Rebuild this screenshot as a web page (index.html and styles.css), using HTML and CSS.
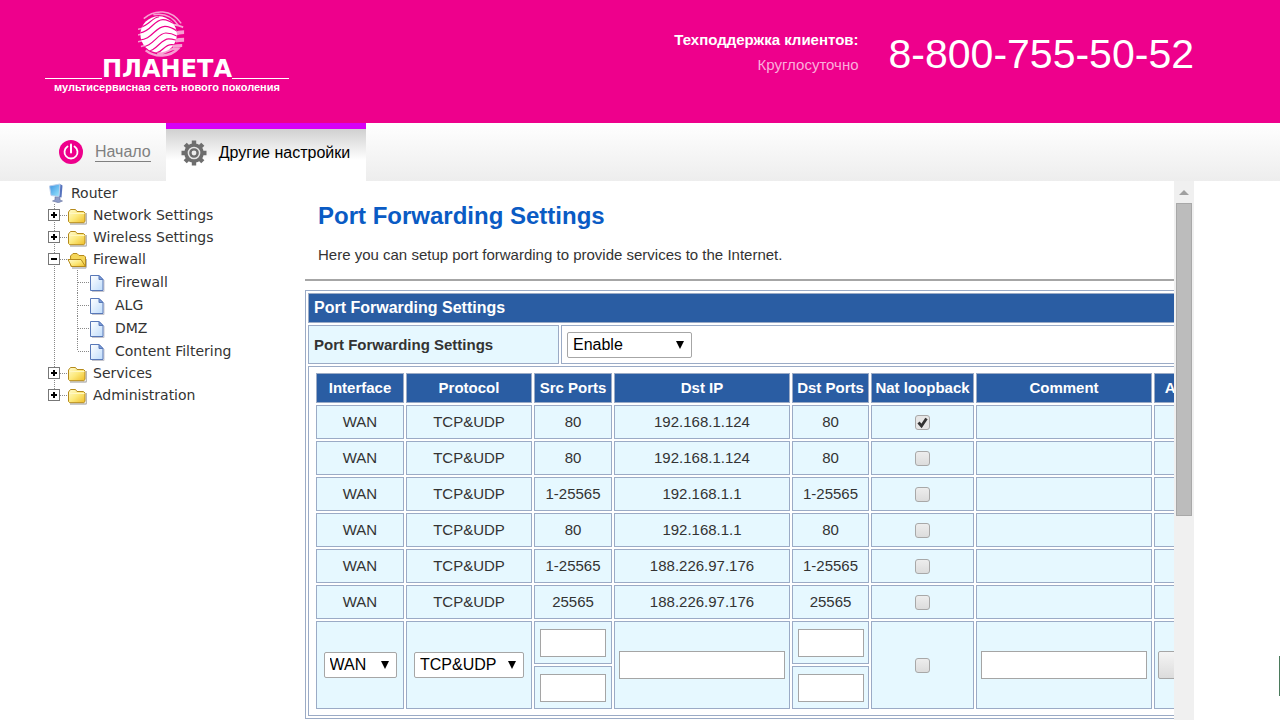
FILE: index.html
```html
<!DOCTYPE html>
<html lang="ru">
<head>
<meta charset="utf-8">
<title>Port Forwarding Settings</title>
<link rel="stylesheet" href="styles.css">
</head>
<body>
<svg class="defs" aria-hidden="true">
  <defs>
    <linearGradient id="gold" x1="0" y1="0" x2="1" y2="1"><stop offset="0" stop-color="#fffbd0"/><stop offset=".5" stop-color="#fce97c"/><stop offset="1" stop-color="#efbd27"/></linearGradient>
    <linearGradient id="paper" x1="0" y1="0" x2="1" y2="1"><stop offset="0" stop-color="#fff"/><stop offset="1" stop-color="#bfdcfb"/></linearGradient>
    <linearGradient id="screen" x1="0" y1="0" x2="1" y2="1"><stop offset="0" stop-color="#3b8fe0"/><stop offset="1" stop-color="#9beaff"/></linearGradient>
  </defs>
  <symbol id="folder" viewBox="0 0 20 18">
    <path d="M3 17h15.500q1 0 1-1V6" fill="none" stroke="#b9b9b9" stroke-width="1.500"/>
    <path d="M1.500 14.500V5l2-2.500h5L10 4.500h6.500L18 6v8.500l-1.200 1.200H2.700z" fill="url(#gold)" stroke="#b58a1c"/>
    <path d="M2.500 6.500h15" stroke="#fff7c0"/>
  </symbol>
  <symbol id="folder-open" viewBox="0 0 20 18">
    <path d="M5 17h13.500l1-2V8" fill="none" stroke="#b9b9b9" stroke-width="1.500"/>
    <path d="M4 15.500L3.500 5 6 2.500h4L12 4.500h5L18.500 6v9.500z" fill="#f5d659" stroke="#b58a1c"/>
    <path d="M1 8.500h13l4.500 7H4.500z" fill="url(#gold)" stroke="#b58a1c"/>
  </symbol>
  <symbol id="page" viewBox="0 0 16 18">
    <path d="M3 17.500h12V6" fill="none" stroke="#c4c4cc"/>
    <path d="M1.500 1.500h8.500l4 4v11H1.500z" fill="url(#paper)" stroke="#5878b8"/>
    <path d="M10 1.500v4h4z" fill="#7f9fdc" stroke="#5878b8"/>
  </symbol>
  <symbol id="computer" viewBox="0 0 16 20">
    <path d="M12 1l2.500 1.500-1 12-2.500-.5z" fill="#5673bd"/>
    <path d="M1.500 3L12 1l-1 12.500-8-1z" fill="url(#screen)" stroke="#b9cdec"/>
    <path d="M7 14l5 .5v2.500l2.500 1-4 1.700L4.500 18l2.500-1z" fill="#8d9cca" stroke="#66749f" stroke-width=".6"/>
  </symbol>
</svg>

<header class="header">
  <div class="logo">
    <svg class="globe" viewBox="0 0 50 50" aria-hidden="true">
      <defs><clipPath id="ball"><circle cx="21.500" cy="25.500" r="19"/></clipPath></defs>
      <g fill="none" stroke="#f7a0d3">
        <path d="M6 9C17-1 35-1 45 14" stroke-width="1.500"/>
        <path d="M16 5c12-2 20 2 26 11" stroke-width="1.500"/>
        <path d="M32 17c6-3 10-1 15 1" stroke-width="2"/>
        <path d="M39 25c3-2 6-2 9-2" stroke-width="4"/>
        <path d="M39 32c3-1 6-1 9-1" stroke-width="4"/>
        <path d="M36 38c4-1 7-1 10-1" stroke-width="3"/>
        <path d="M8 42c10 8 26 7 34-2-8-1-15 6-22 6" stroke-width="2.500"/>
        <path d="M0 20l5-1M0 26l4-1M0 33l5-1M3 38l4-1" stroke-width="1.500"/>
      </g>
      <circle cx="21.500" cy="25.500" r="19" fill="#fff"/>
      <g clip-path="url(#ball)" fill="none" stroke="#ee008c" stroke-width="1.200">
        <path d="M2 18c10-2 12-10 20-11"/>
        <path d="M1 24c13-1 15-14 25-14 6 0 10 3 16 7"/>
        <path d="M1 31c13 1 17-14 27-14 5 0 9 2 14 6"/>
        <path d="M2 38c13 2 18-14 27-14 5 0 8 1 13 4"/>
        <path d="M6 43c13 2 17-13 26-13 4 0 6 1 10 2"/>
        <path d="M18 45c8-1 9-9 17-9 3 0 5 0 7 1"/>
      </g>
    </svg>
    <div class="wordmark">ПЛАНЕТА</div>
    <div class="tagline">мультисервисная сеть нового поколения</div>
  </div>
  <div class="support">
    <div class="hours"><strong>Техподдержка клиентов:</strong><span>Круглосуточно</span></div>
    <div class="phone">8-800-755-50-52</div>
  </div>
</header>

<nav class="tabs">
  <a class="tab" href="#home">
    <svg width="24" height="24" viewBox="0 0 24 24" aria-hidden="true"><circle cx="12" cy="12" r="12" fill="#ee008c"/><path d="M8.500 6.500a6.500 6.500 0 1 0 7 0" fill="none" stroke="#fff" stroke-width="1.800" stroke-linecap="round"/><path d="M12 4.500v8" stroke="#fff" stroke-width="2" stroke-linecap="round"/></svg>
    <span>Начало</span>
  </a>
  <a class="tab active" href="#other">
    <svg width="26" height="26" viewBox="0 0 26 26" aria-hidden="true"><circle cx="13" cy="13" r="9.800" fill="#6e6e6e"/><g stroke="#6e6e6e" stroke-width="4.400"><path d="M13 .5v25M.5 13h25M4.200 4.200l17.600 17.600M21.800 4.200L4.200 21.800"/></g><circle cx="13" cy="13" r="5.600" fill="#6e6e6e" stroke="#e6e6e6" stroke-width="1.500"/><circle cx="13" cy="13" r="2.400" fill="#eee"/></svg>
    <span>Другие настройки</span>
  </a>
</nav>

<main class="main">
  <aside class="tree">
    <a class="node root" href="#router"><svg class="ico-pc" aria-hidden="true"><use href="#computer"/></svg>Router</a>
    <ul>
      <li><div class="node"><button class="toggle plus" aria-label="Expand Network Settings"></button><svg class="ico" aria-hidden="true"><use href="#folder"/></svg><a href="#n">Network Settings</a></div></li>
      <li><div class="node"><button class="toggle plus" aria-label="Expand Wireless Settings"></button><svg class="ico" aria-hidden="true"><use href="#folder"/></svg><a href="#w">Wireless Settings</a></div></li>
      <li><div class="node"><button class="toggle" aria-label="Collapse Firewall"></button><svg class="ico" aria-hidden="true"><use href="#folder-open"/></svg><a href="#f">Firewall</a></div>
        <ul class="sub">
          <li class="leaf"><svg class="ico-page" aria-hidden="true"><use href="#page"/></svg><a href="#ff">Firewall</a></li>
          <li class="leaf"><svg class="ico-page" aria-hidden="true"><use href="#page"/></svg><a href="#alg">ALG</a></li>
          <li class="leaf"><svg class="ico-page" aria-hidden="true"><use href="#page"/></svg><a href="#dmz">DMZ</a></li>
          <li class="leaf"><svg class="ico-page" aria-hidden="true"><use href="#page"/></svg><a href="#cf">Content Filtering</a></li>
        </ul>
      </li>
      <li><div class="node"><button class="toggle plus" aria-label="Expand Services"></button><svg class="ico" aria-hidden="true"><use href="#folder"/></svg><a href="#s">Services</a></div></li>
      <li><div class="node"><button class="toggle plus" aria-label="Expand Administration"></button><svg class="ico" aria-hidden="true"><use href="#folder"/></svg><a href="#a">Administration</a></div></li>
    </ul>
  </aside>

  <section class="pane">
    <h1>Port Forwarding Settings</h1>
    <p class="intro">Here you can setup port forwarding to provide services to the Internet.</p>
    <hr>
    <table class="form">
      <colgroup><col class="c-label"><col></colgroup>
      <tr><th class="title" colspan="2">Port Forwarding Settings</th></tr>
      <tr class="switch"><th class="label"><label for="enable">Port Forwarding Settings</label></th><td><select id="enable" class="w-enable"><option>Enable</option><option>Disable</option></select></td></tr>
      <tr><td colspan="2">
        <table class="rules">
          <colgroup><col class="c-if"><col class="c-proto"><col class="c-src"><col class="c-ip"><col class="c-dst"><col class="c-nat"><col class="c-com"><col class="c-act"></colgroup>
          <thead><tr><th>Interface</th><th>Protocol</th><th>Src Ports</th><th>Dst IP</th><th>Dst Ports</th><th>Nat loopback</th><th>Comment</th><th>Action</th></tr></thead>
          <tbody>
            <tr class="rule"><td>WAN</td><td>TCP&amp;UDP</td><td>80</td><td>192.168.1.124</td><td>80</td><td><input type="checkbox" aria-label="Nat loopback" checked></td><td></td><td></td></tr>
            <tr class="rule"><td>WAN</td><td>TCP&amp;UDP</td><td>80</td><td>192.168.1.124</td><td>80</td><td><input type="checkbox" aria-label="Nat loopback"></td><td></td><td></td></tr>
            <tr class="rule"><td>WAN</td><td>TCP&amp;UDP</td><td>1-25565</td><td>192.168.1.1</td><td>1-25565</td><td><input type="checkbox" aria-label="Nat loopback"></td><td></td><td></td></tr>
            <tr class="rule"><td>WAN</td><td>TCP&amp;UDP</td><td>80</td><td>192.168.1.1</td><td>80</td><td><input type="checkbox" aria-label="Nat loopback"></td><td></td><td></td></tr>
            <tr class="rule"><td>WAN</td><td>TCP&amp;UDP</td><td>1-25565</td><td>188.226.97.176</td><td>1-25565</td><td><input type="checkbox" aria-label="Nat loopback"></td><td></td><td></td></tr>
            <tr class="rule"><td>WAN</td><td>TCP&amp;UDP</td><td>25565</td><td>188.226.97.176</td><td>25565</td><td><input type="checkbox" aria-label="Nat loopback"></td><td></td><td></td></tr>
            <tr class="add">
              <td rowspan="2"><select class="w-if" aria-label="Interface"><option>WAN</option></select></td>
              <td rowspan="2"><select class="w-proto" aria-label="Protocol"><option>TCP&amp;UDP</option></select></td>
              <td><input type="text" class="w-port" aria-label="Src port from"></td>
              <td rowspan="2"><input type="text" class="w-text" aria-label="Dst IP"></td>
              <td><input type="text" class="w-port" aria-label="Dst port from"></td>
              <td rowspan="2"><input type="checkbox" aria-label="Nat loopback"></td>
              <td rowspan="2"><input type="text" class="w-text" aria-label="Comment"></td>
              <td rowspan="2"><button class="add-btn" type="button" aria-label="Add"></button></td>
            </tr>
            <tr class="add"><td><input type="text" class="w-port" aria-label="Src port to"></td><td><input type="text" class="w-port" aria-label="Dst port to"></td></tr>
          </tbody>
        </table>
      </td></tr>
    </table>
  </section>
  <div class="scrollbar" aria-hidden="true"><span class="up"></span><span class="thumb"></span></div>
</main>
<div class="edge-mark"></div>
</body>
</html>
```
FILE: styles.css
```css
* { box-sizing: border-box; }
body {
  margin: 0;
  height: 100vh;
  overflow: hidden;
  display: flex;
  flex-direction: column;
  background: #fff;
  color: #333;
  font: 15px/18px "Liberation Sans", Arial, sans-serif;
}
a { color: inherit; text-decoration: none; }
ul { list-style: none; margin: 0; padding: 0; }
.defs { position: absolute; width: 0; height: 0; }

/* header */
.header {
  flex: none;
  display: flex;
  justify-content: space-between;
  align-items: flex-start;
  height: 123px;
  padding: 0 86px 0 45px;
  background: #ee008c;
  color: #fff;
}
.logo { display: flex; flex-direction: column; align-items: center; width: 244px; padding-top: 10px; }
.globe { width: 48px; height: 48px; margin-right: 10px; }
.wordmark {
  display: flex;
  align-items: flex-end;
  align-self: stretch;
  font: bold 24px/22px "DejaVu Sans", sans-serif;
}
.wordmark::before, .wordmark::after { content: ""; flex: 1; height: 1px; margin-bottom: 1px; background: #fff; }
.tagline { font-size: 11px; line-height: 14px; font-weight: bold; white-space: nowrap; }
.support { display: flex; gap: 30px; padding-top: 30px; }
.hours { display: flex; flex-direction: column; align-items: flex-end; gap: 5px; line-height: 20px; }
.hours span { color: #fbaedb; }
.phone { font-size: 41px; line-height: 48px; }

/* tabs */
.tabs {
  flex: none;
  display: flex;
  height: 58px;
  padding-left: 45px;
  background: linear-gradient(#fff, #ededed);
  font-size: 16px;
}
.tab { display: flex; align-items: center; gap: 12px; padding: 0 15px 0 14px; color: #808080; }
.tab:not(.active) span { border-bottom: 1px solid #808080; }
.tab.active {
  border-top: 6px solid #d800f5;
  padding: 0 16px 4px 15px;
  background: linear-gradient(#d0d0d0, #fff 60%);
  color: #000;
}

/* body */
.main { flex: 1; min-height: 0; display: flex; padding-right: 86px; }
.tree { flex: none; width: 305px; padding-left: 48px; font: 14px/22px "DejaVu Sans", Verdana, sans-serif; }
.node { display: flex; align-items: center; height: 22px; }
.root { height: 23px; gap: 7px; }
.ico-pc { width: 16px; height: 20px; }
.ico { width: 20px; height: 18px; margin: 2px 6px 0 7px; }
.ico-page { width: 16px; height: 18px; margin: 2px 10px 0 0; }
.toggle {
  width: 12px;
  height: 12px;
  padding: 0;
  border: 1px solid #777;
  background: linear-gradient(#000, #000) center / 6px 2px no-repeat #fff;
}
.toggle.plus {
  background: linear-gradient(#000, #000) center / 6px 2px no-repeat, linear-gradient(#000, #000) center / 2px 6px no-repeat, #fff;
}
.tree > ul > li {
  background: repeating-linear-gradient(#888 0 1px, transparent 1px 2px) 6px 0 / 1px 100% no-repeat,
    repeating-linear-gradient(90deg, #888 0 1px, transparent 1px 2px) 12px 11px / 8px 1px no-repeat;
}
.tree > ul > li:last-child { background-size: 1px 11px, 8px 1px; }
.leaf {
  display: flex;
  align-items: center;
  height: 23px;
  padding-left: 41px;
  background: repeating-linear-gradient(#888 0 1px, transparent 1px 2px) 29px 0 / 1px 100% no-repeat,
    repeating-linear-gradient(90deg, #888 0 1px, transparent 1px 2px) 30px 12px / 11px 1px no-repeat;
}
.leaf:last-child { background-size: 1px 12px, 11px 1px; }

.pane { flex: 1; min-width: 0; overflow: hidden; }
h1 { margin: 20px 13px 0; font-size: 24px; line-height: 30px; color: #0a5bc4; }
.intro { margin: 15px 13px 0; }
hr { margin: 15px 0 9px; border: 0; height: 2px; background: #a6a6a6; }

table { border-spacing: 2px; }
th, td { border: 1px solid #9babc6; padding: 0; }
.form { width: 960px; border: 1px solid #9babc6; table-layout: fixed; }
.form > tbody > tr > th, .form > tbody > tr > td { padding: 4px 5px; text-align: left; }
.c-label { width: 251px; }
.form .title, .rules th { background: #2a5da3; color: #fff; }
.title { height: 30px; font-size: 16px; }
.switch { height: 39px; }
.label { background: #e6f8ff; }

.rules { table-layout: fixed; width: 910px; text-align: center; }
.rules th { height: 30px; }
.rules td { background: #e6f8ff; }
.rule td { height: 34px; }
.add td { height: 43px; }
.c-if { width: 88px; }
.c-proto { width: 126px; }
.c-src { width: 78px; }
.c-ip { width: 176px; }
.c-dst { width: 77px; }
.c-nat { width: 103px; }
.c-com { width: 176px; }

/* controls */
input, select, button { font: inherit; }
input, select { margin: 0; }
.rules input, .rules select { display: block; margin: 0 auto; }
input[type="text"] { height: 28px; border: 1px solid #a5a5a5; background: #fff; padding: 0 4px; }
.w-port { width: 66px; }
.w-text { width: 166px; }
select {
  appearance: none;
  height: 26px;
  padding: 0 5px;
  border: 1px solid #a6a6a6;
  border-radius: 2px;
  color: #000;
  font-size: 16px;
  background: url("data:image/svg+xml,%3Csvg xmlns='http://www.w3.org/2000/svg' width='8' height='8'%3E%3Cpath d='M0 0h8L4 8z'/%3E%3C/svg%3E") right 7px center no-repeat #fff;
}
.w-enable { display: block; width: 125px; }
.w-if { width: 73px; }
.w-proto { width: 110px; }
input[type="checkbox"] {
  appearance: none;
  width: 15px;
  height: 15px;
  border: 1px solid #a8a8a8;
  border-radius: 3px;
  background: linear-gradient(#ededed, #dcdcdc);
}
input[type="checkbox"]:checked {
  background: url("data:image/svg+xml,%3Csvg xmlns='http://www.w3.org/2000/svg' width='13' height='13'%3E%3Cpath d='M2.500 6.500l3 3.500 5-7.500' fill='none' stroke='%23333' stroke-width='2.800'/%3E%3C/svg%3E") center no-repeat, #e6e6e6;
}
.add-btn {
  display: block;
  width: 60px;
  height: 28px;
  margin: 0 auto;
  border: 1px solid #a6a6a6;
  border-radius: 2px;
  background: linear-gradient(#f4f4f4, #dcdcdc);
}

/* scrollbar */
.scrollbar { flex: none; width: 20px; display: flex; flex-direction: column; align-items: center; background: #f0f0f0; }
.up { height: 22px; display: flex; align-items: center; }
.up::before { content: ""; border: 5px solid transparent; border-top: 0; border-bottom-color: #a0a0a0; }
.thumb { width: 16px; height: 58%; background: #bcbcbc; border: 1px solid #a8a8a8; }

.edge-mark { position: absolute; right: 0; bottom: 24px; width: 1px; height: 40px; background: #4b7a5c; }
```
